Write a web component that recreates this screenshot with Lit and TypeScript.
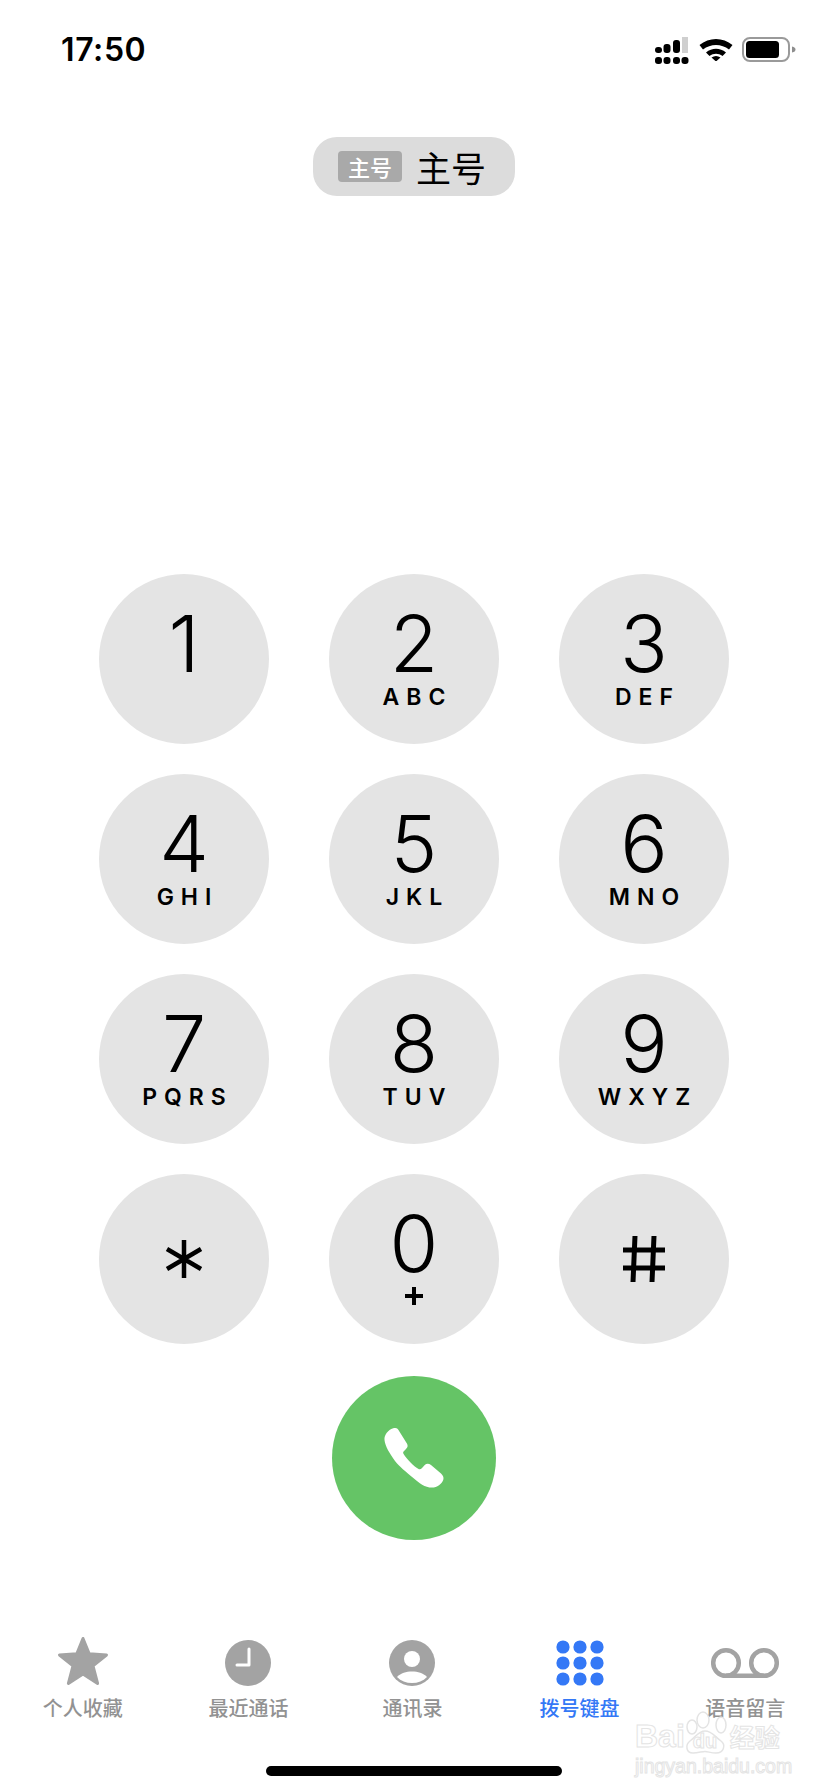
import { LitElement, html, css, svg } from 'lit';
import { customElement } from 'lit/decorators.js';

const keys = [
  { d: '1', s: '' }, { d: '2', s: 'ABC' }, { d: '3', s: 'DEF' },
  { d: '4', s: 'GHI' }, { d: '5', s: 'JKL' }, { d: '6', s: 'MNO' },
  { d: '7', s: 'PQRS' }, { d: '8', s: 'TUV' }, { d: '9', s: 'WXYZ' },
];

const tabs = [
  {
    label: '个人收藏',
    icon: svg`<svg width="52" height="50" viewBox="0 0 52 50"><path fill="#a3a3a3" stroke="#a3a3a3" stroke-width="3" stroke-linejoin="round" d="M26 2.5 32.2 17.8 49.5 19 36 29.8 40.6 47.5 26 37.9 11.4 47.5 16 29.8 2.5 19 19.8 17.8Z"/></svg>`,
  },
  {
    label: '最近通话',
    icon: svg`<svg width="46" height="46" viewBox="0 0 46 46"><circle cx="23" cy="23" r="23" fill="#a3a3a3"/><path d="M24 9V25H12" fill="none" stroke="#fff" stroke-width="3" stroke-linecap="round" stroke-linejoin="round"/></svg>`,
  },
  {
    label: '通讯录',
    icon: svg`<svg width="46" height="46" viewBox="0 0 46 46"><circle cx="23" cy="23" r="23" fill="#a3a3a3"/><circle cx="23" cy="19" r="8" fill="#fff"/><path d="M8 37C12 33 17 31.500 23 31.500S34 33 38 37C34 41 29 43 23 43S12 41 8 37Z" fill="#fff"/></svg>`,
  },
  {
    label: '拨号键盘',
    active: true,
    icon: svg`<svg width="48" height="46" viewBox="0 0 48 46" fill="#3478f6">
      ${[7, 23, 39].map((y) => [7, 24, 41].map((x) => svg`<circle cx=${x} cy=${y} r="6.6"/>`))}
    </svg>`,
  },
  {
    label: '语音留言',
    icon: svg`<svg width="68" height="46" viewBox="0 0 68 46"><g fill="none" stroke="#a3a3a3" stroke-width="4.5"><circle cx="15" cy="23" r="12.8"/><circle cx="53" cy="23" r="12.8"/><path d="M15 35.8H53"/></g></svg>`,
  },
];

@customElement('app-root')
export class AppRoot extends LitElement {

  static styles = css`
    :host {
      display: block;
      position: relative;
      width: 828px;
      height: 1792px;
      overflow: hidden;
      background: #fff;
      color: #000;
      font-family: Inter, "Noto Sans CJK SC", sans-serif;
    }

    .status {
      display: flex;
      align-items: flex-start;
      justify-content: space-between;
      height: 137px;
      box-sizing: border-box;
      padding: 30px 32px 0 61px;
    }

    .time {
      font-size: 32px;
      line-height: 40px;
      font-weight: 600;
      letter-spacing: 0.6px;
    }

    .status-icons {
      display: flex;
      align-items: flex-start;
      gap: 9px;
      padding-top: 7px;
    }

    .status-icons svg {
      display: block;
    }

    .wifi {
      margin-left: 1px;
    }

    .line-row {
      display: flex;
      justify-content: center;
      height: 437px;
    }

    .line {
      display: flex;
      align-items: center;
      gap: 14px;
      box-sizing: border-box;
      width: 202px;
      height: 59px;
      padding-left: 25px;
      background: #dcdcdc;
      border-radius: 24px;
      font-family: "Noto Sans CJK SC", sans-serif;
    }

    .line-badge {
      display: flex;
      align-items: center;
      justify-content: center;
      width: 64px;
      height: 31px;
      background: #a9a9a9;
      border-radius: 4px;
      color: #fff;
      font-size: 22px;
      line-height: 31px;
      font-weight: 500;
    }

    .line-name {
      font-size: 35px;
      line-height: 40px;
      font-weight: 400;
    }

    .pad {
      display: grid;
      grid-template-columns: repeat(3, 170px);
      gap: 30px 60px;
      justify-content: center;
    }

    .key {
      display: flex;
      flex-direction: column;
      align-items: center;
      box-sizing: border-box;
      height: 170px;
      padding-top: 29px;
      background: #e4e4e4;
      border-radius: 50%;
    }

    .digit {
      font-size: 79px;
      line-height: 80px;
      font-weight: 350;
    }

    .letters {
      margin-top: 1px;
      font-size: 23px;
      line-height: 26px;
      font-weight: 600;
      letter-spacing: 7px;
      margin-right: -7px;
    }

    .plus {
      margin-top: 3px;
    }

    .symbol {
      display: flex;
      align-items: center;
      justify-content: center;
      height: 170px;
      background: #e4e4e4;
      border-radius: 50%;
    }

    .call-row {
      display: flex;
      justify-content: center;
      padding-top: 32px;
    }

    .call {
      display: flex;
      align-items: center;
      justify-content: center;
      width: 164px;
      height: 164px;
      background: #65c466;
      border-radius: 50%;
    }

    .tabs {
      display: grid;
      grid-template-columns: repeat(5, 1fr);
      margin-top: 96px;
    }

    .tab {
      display: flex;
      flex-direction: column;
      align-items: center;
      font-family: "Noto Sans CJK SC", sans-serif;
      font-size: 20px;
      line-height: 26px;
      font-weight: 500;
      color: #929292;
    }

    .tab:nth-child(3) {
      padding-right: 3px;
    }

    .tab.active {
      color: #3478f6;
    }

    .tab-icon {
      display: flex;
      align-items: flex-end;
      justify-content: center;
      height: 50px;
      margin-bottom: 9px;
    }

    .home {
      position: absolute;
      left: 266px;
      top: 1766px;
      width: 296px;
      height: 10px;
      background: #000;
      border-radius: 5px;
    }

    .watermark {
      position: absolute;
      left: 635px;
      top: 1710px;
      width: 170px;
      color: #fff;
      -webkit-text-stroke: 1px #e4e4e4;
      font-family: "Liberation Sans", "Noto Sans CJK SC", sans-serif;
      pointer-events: none;
    }

    .wm-brand {
      display: flex;
      align-items: flex-end;
      height: 44px;
      font-size: 32px;
      line-height: 36px;
      font-weight: 700;
      white-space: nowrap;
    }

    .wm-paw {
      display: block;
      flex: none;
      margin-left: -2px;
    }

    .wm-paw text {
      fill: #fff;
      stroke: #e4e4e4;
      stroke-width: 1px;
      font-size: 20px;
      font-weight: 700;
    }

    .wm-cn {
      font-size: 25px;
      line-height: 32px;
    }

    .wm-site {
      margin-top: 1px;
      font-size: 19.5px;
      line-height: 22px;
      white-space: nowrap;
    }
  `;

  renderSignal() {
    const bars = [[655, 47, 6], [663.500, 44, 9], [673, 40, 13]];
    return html`<svg width="34" height="28" viewBox="655 37 34 28">
      ${bars.map(([x, y, h]) => svg`<rect x=${x} y=${y} width="7" height=${h} rx="3"/>`)}
      <rect x="682" y="37" width="6" height="16" fill="#cfcfcf"/>
      ${[658.500, 667, 676.500, 685].map((x) => svg`<rect x=${x - 3.500} y="57" width="7" height="7" rx="3"/>`)}
    </svg>`;
  }

  renderWifi() {
    return html`<svg class="wifi" width="34" height="24" viewBox="0 0 34 24">
      <path d="M.5 8C10 0 24 0 33.500 8L30 12.500C22.500 6.500 11.500 6.500 4 12.500Z"/>
      <path d="M7 15.500C13 10.500 21 10.500 27 15.500L23.500 19C19.500 16 14.500 16 10.500 19Z"/>
      <path d="M12.500 20.500C15.500 18.500 18.500 18.500 21.500 20.500L17 24.500Z"/>
    </svg>`;
  }

  renderBattery() {
    return html`<svg width="54" height="26" viewBox="0 0 54 26">
      <rect x="1" y="1" width="46" height="23" rx="7" fill="none" stroke="#9a9a9a" stroke-width="2"/>
      <rect x="4" y="4" width="33" height="17" rx="3.500"/>
      <path d="M50 9.500C52.500 10 53.500 11 53.500 12.500S52.500 15 50 15.500Z" fill="#8e8e8e"/>
    </svg>`;
  }

  render() {
    return html`
      <div class="status">
        <span class="time">17:50</span>
        <div class="status-icons">
          ${this.renderSignal()}
          ${this.renderWifi()}
          ${this.renderBattery()}
        </div>
      </div>

      <div class="line-row">
        <div class="line">
          <span class="line-badge">主号</span>
          <span class="line-name">主号</span>
        </div>
      </div>

      <div class="pad">
        ${keys.map((k) => html`
          <div class="key">
            <span class="digit">${k.d}</span>
            ${k.s ? html`<span class="letters">${k.s}</span>` : ''}
          </div>
        `)}
        <div class="symbol">
          <svg width="44" height="44" viewBox="0 0 44 44">
            <path d="M22 3V41M5 12 39 32M39 12 5 32" stroke="#000" stroke-width="4.500" fill="none"/>
          </svg>
        </div>
        <div class="key">
          <span class="digit">0</span>
          <svg class="plus" width="20" height="20" viewBox="0 0 20 20">
            <path d="M10 1V19M1 10H19" stroke="#000" stroke-width="4" fill="none"/>
          </svg>
        </div>
        <div class="symbol">
          <svg width="44" height="48" viewBox="0 0 44 48">
            <path d="M13 1 11 47M32 1 30 47M1 15H43M1 33H43" stroke="#000" stroke-width="5" fill="none"/>
          </svg>
        </div>
      </div>

      <div class="call-row">
        <div class="call">
          <svg width="60" height="60" viewBox="0 0 60 60">
            <path fill="#fff" d="M10 0C12 0 13.300 .3 14.300 1.700L23.200 16C24 18 23.600 19.500 22 21L19.600 23.600C19 24.400 19 25.200 19.600 26C22 30 30 39 35 41.200C36 41.600 37 41 37.800 40.200L41 36.800C42.500 35.400 45 35.500 47 37L57 45.600C59 47.400 60 49.500 59.300 51.800C58 56 53 59.600 48 59.600C41 59.600 35 55 29.300 50C22 44 15 38 11 33C6 26 1 18 .5 12C0 7 4 1.500 10 0Z"/>
          </svg>
        </div>
      </div>

      <div class="tabs">
        ${tabs.map((t) => html`
          <div class="tab ${t.active ? 'active' : ''}">
            <div class="tab-icon">${t.icon}</div>
            <span>${t.label}</span>
          </div>
        `)}
      </div>

      <div class="home"></div>

      <div class="watermark">
        <div class="wm-brand">
          <span>Bai</span>
          <svg class="wm-paw" width="47" height="44" viewBox="0 0 47 44">
            <g fill="#fff" fill-opacity="0.6" stroke="#e4e4e4" stroke-width="1.500">
              <ellipse cx="9" cy="17" rx="5" ry="7"/>
              <ellipse cx="20" cy="10" rx="6" ry="8"/>
              <ellipse cx="38" cy="15" rx="5" ry="8"/>
              <path d="M22 21C29 21 32 27 38 31C43 35 41 43 33 43C28 43 25 41.500 22 41.500S15 43 10 43C3 43 2 35 7 31C13 27 15 21 22 21Z"/>
            </g>
            <text x="22" y="38" text-anchor="middle">du</text>
          </svg>
          <span class="wm-cn">经验</span>
        </div>
        <div class="wm-site">jingyan.baidu.com</div>
      </div>
    `;
  }

}
